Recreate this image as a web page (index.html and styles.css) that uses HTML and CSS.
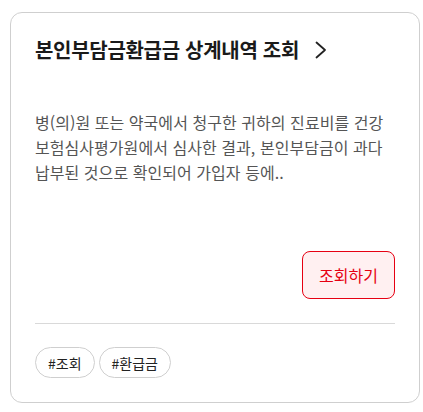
FILE: index.html
```html
<!DOCTYPE html>
<html lang="ko">
<head>
<meta charset="utf-8">
<link rel="stylesheet" href="styles.css">
</head>
<body>
<div class="card">
  <div class="title-row">
    <h2 class="title">본인부담금환급금 상계내역 조회</h2>
    <svg class="chev" width="12" height="18" viewBox="0 0 12 18"><path d="M1.5 1.5 L10 9 L1.5 16.5" fill="none" stroke="#222" stroke-width="1.8" stroke-linecap="round" stroke-linejoin="round"/></svg>
  </div>
  <p class="desc">병(의)원 또는 약국에서 청구한 귀하의 진료비를 건강보험심사평가원에서 심사한 결과, 본인부담금이 과다 납부된 것으로 확인되어 가입자 등에..</p>
  <div class="actions">
    <button class="btn">조회하기</button>
  </div>
  <hr class="divider">
  <div class="tags">
    <span class="tag">#조회</span>
    <span class="tag">#환급금</span>
  </div>
</div>
</body>
</html>
```

FILE: styles.css
```css
* { box-sizing: border-box; }
body {
  margin: 0;
  font-family: "Noto Sans CJK KR", "Noto Sans", sans-serif;
  background: #fff;
}
.card {
  margin: 12px 0 0 10px;
  width: 410px;
  border: 1px solid #cfcfcf;
  border-radius: 12px;
  padding: 24px 24px 24px 24px;
}
.title-row {
  display: flex;
  align-items: center;
  gap: 16px;
  height: 26px;
}
.title {
  margin: 0;
  font-size: 20px;
  font-weight: 700;
  line-height: 26px;
  color: #1a1a1a;
  letter-spacing: -0.3px;
}
.chev { display: block; margin-top: -1px; }
.desc {
  margin: 47px 0 0;
  font-size: 16px;
  line-height: 25px;
  color: #555;
  letter-spacing: 0.05px;
}
.actions {
  display: flex;
  justify-content: flex-end;
  margin-top: 66px;
}
.btn {
  width: 93px;
  height: 48px;
  border: 1px solid #e60012;
  border-radius: 8px;
  background: #fff0f1;
  color: #e60012;
  font-family: inherit;
  font-size: 16px;
  padding: 0;
}
.divider {
  margin: 24px 0 0;
  border: 0;
  border-top: 1px solid #d9d9d9;
}
.tags {
  display: flex;
  gap: 4px;
  margin-top: 23px;
}
.tag {
  display: inline-flex;
  align-items: center;
  justify-content: center;
  height: 31px;
  padding: 0 12px;
  border: 1px solid #cfcfcf;
  border-radius: 16px;
  font-size: 14px;
  color: #222;
}
```
